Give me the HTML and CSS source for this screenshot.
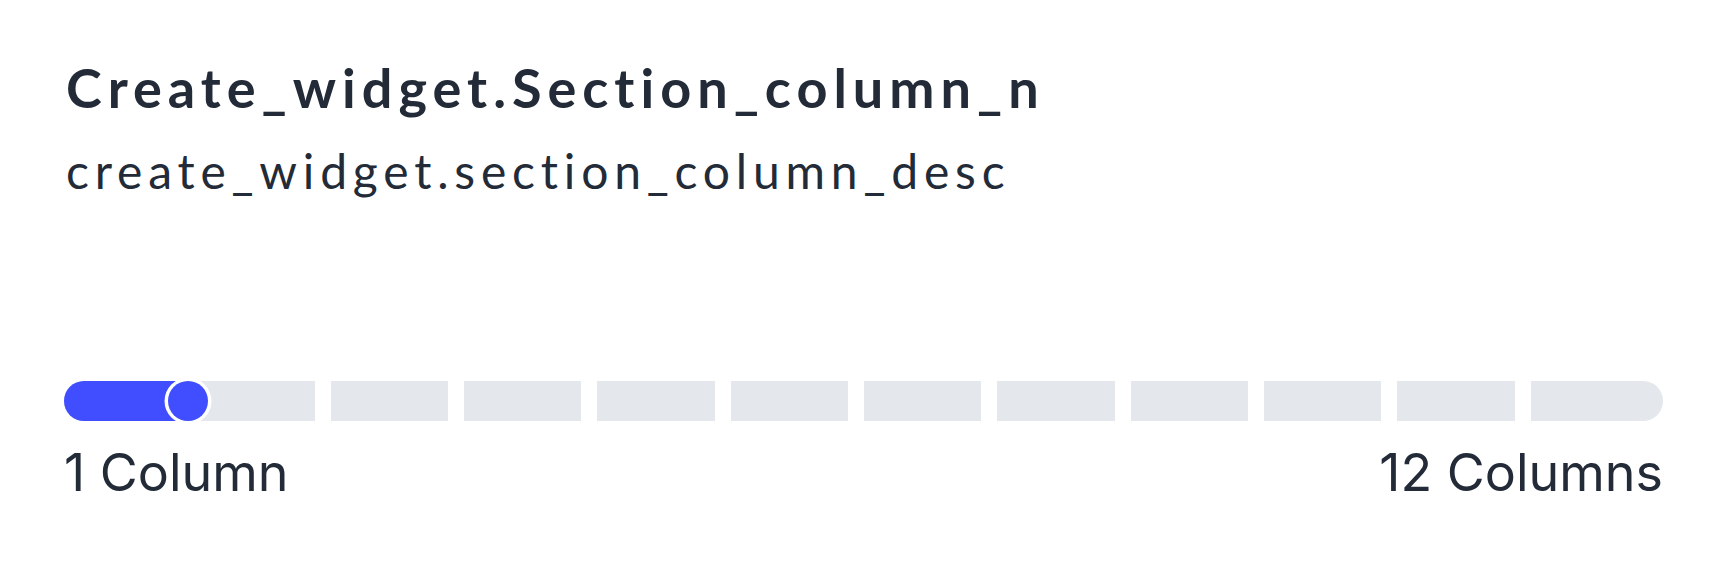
FILE: index.html
```html
<!DOCTYPE html>
<html lang="en">
<head>
<meta charset="utf-8">
<title>Section columns</title>
<link rel="stylesheet" href="styles.css">
</head>
<body>
<section class="card">
  <h1 class="title">Create_widget.Section_column_n</h1>
  <p class="desc">create_widget.section_column_desc</p>
  <div class="slider">
    <div class="track">
      <span class="seg"></span><span class="seg"></span><span class="seg"></span><span class="seg"></span>
      <span class="seg"></span><span class="seg"></span><span class="seg"></span><span class="seg"></span>
      <span class="seg"></span><span class="seg"></span><span class="seg"></span><span class="seg"></span>
    </div>
    <div class="fill"></div>
    <div class="thumb"></div>
  </div>
  <div class="labels">
    <span>1 Column</span>
    <span>12 Columns</span>
  </div>
</section>
</body>
</html>
```

FILE: styles.css
```css
html, body {
  margin: 0;
  padding: 0;
  background: #ffffff;
}

.card {
  padding: 56px 65px 0 64px;
  color: #222b37;
}

.title {
  margin: 0;
  font-family: "Lato", "Open Sans", sans-serif;
  font-weight: 700;
  font-size: 54px;
  line-height: 1.2;
  letter-spacing: 6px;
  padding-left: 2px;
}

.desc {
  margin: 21px 0 0;
  font-family: "Lato", "Open Sans", sans-serif;
  font-weight: 400;
  font-size: 48px;
  line-height: 1.2;
  letter-spacing: 5.8px;
  padding-left: 2px;
}

.slider {
  position: relative;
  margin-top: 182px;
  height: 40px;
}

.track {
  display: grid;
  grid-template-columns: repeat(11, 117.33px) 1fr;
  column-gap: 16px;
  height: 40px;
}

.seg {
  background: #e4e7ec;
}

.seg:first-child {
  border-radius: 20px 0 0 20px;
}

.seg:last-child {
  border-radius: 0 20px 20px 0;
}

.fill {
  position: absolute;
  left: 0;
  top: 0;
  width: 124px;
  height: 40px;
  border-radius: 20px 0 0 20px;
  background: #404eff;
}

.thumb {
  position: absolute;
  left: 104px;
  top: 0;
  width: 40px;
  height: 40px;
  border-radius: 50%;
  background: #404eff;
  box-shadow: 0 0 0 3.5px #ffffff;
}

.labels {
  display: flex;
  justify-content: space-between;
  margin-top: 21px;
  font-family: "Inter", "Roboto", sans-serif;
  font-weight: 400;
  font-size: 52px;
  line-height: 1.21;
}
```
